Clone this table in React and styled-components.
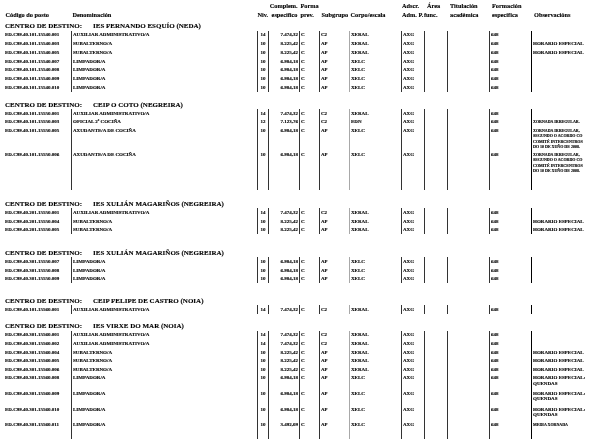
import styled, { createGlobalStyle } from "styled-components";

const GlobalStyle = createGlobalStyle`
  html, body {
    margin: 0;
    padding: 0;
    background: #fff;
    overflow: hidden;
  }
  body {
    font-family: "Liberation Serif", "Times New Roman", serif;
    color: #000;
  }
`;

const COLS = "67px 186px 11px 31px 20px 30px 52px 23px 23px 42px 42px 1fr";

const aux = (code) => ({
  code,
  den: "AUXILIAR ADMINISTRATIVO/A",
  niv: "14",
  comp: "7.474,32",
  sub: "C2",
  corpo: "XERAL",
  obs: [],
});

const subal = (code, obs = ["HORARIO ESPECIAL"]) => ({
  code,
  den: "SUBALTERNO/A",
  niv: "10",
  comp: "8.225,42",
  sub: "AP",
  corpo: "XERAL",
  obs,
});

const limp = (code, obs = [], comp = "6.984,18", h, small) => ({
  code,
  den: "LIMPADOR/A",
  niv: "10",
  comp,
  sub: "AP",
  corpo: "XELC",
  obs,
  h,
  small,
});

const irregular = [
  "XORNADA IRREGULAR,",
  "SEGUNDO O ACORDO CO",
  "COMITÉ INTERCENTROS",
  "DO 10 DE XUÑO DE 2008.",
];

const quendas = ["HORARIO ESPECIAL:", "QUENDAS"];

const sections = [
  {
    name: "IES FERNANDO ESQUÍO (NEDA)",
    mt: 4,
    rowH: 8.8,
    rows: [
      aux("ED.C99.40.101.15540.001"),
      subal("ED.C99.40.101.15540.003"),
      subal("ED.C99.40.101.15540.005"),
      limp("ED.C99.40.101.15540.007"),
      limp("ED.C99.40.101.15540.008"),
      limp("ED.C99.40.101.15540.009"),
      limp("ED.C99.40.101.15540.010"),
    ],
  },
  {
    name: "CEIP O COTO (NEGREIRA)",
    mt: 8.5,
    rows: [
      aux("ED.C99.40.101.15550.001"),
      {
        code: "ED.C99.40.101.15550.003",
        den: "OFICIAL 2ª COCIÑA",
        niv: "12",
        comp: "7.123,76",
        sub: "C2",
        corpo: "EDN",
        obs: ["XORNADA IRREGULAR."],
        small: true,
      },
      {
        code: "ED.C99.40.101.15550.005",
        den: "AXUDANTE/A DE COCIÑA",
        niv: "10",
        comp: "6.984,18",
        sub: "AP",
        corpo: "XELC",
        obs: irregular,
        small: true,
        h: 24,
      },
      {
        code: "ED.C99.40.101.15550.006",
        den: "AXUDANTE/A DE COCIÑA",
        niv: "10",
        comp: "6.984,18",
        sub: "AP",
        corpo: "XELC",
        obs: irregular,
        small: true,
        h: 39.5,
      },
    ],
  },
  {
    name: "IES XULIÁN MAGARIÑOS (NEGREIRA)",
    mt: 10,
    rows: [
      aux("ED.C99.40.201.15550.001"),
      subal("ED.C99.40.201.15550.004"),
      subal("ED.C99.40.201.15550.005"),
    ],
  },
  {
    name: "IES XULIÁN MAGARIÑOS (NEGREIRA)",
    mt: 14.7,
    rows: [
      limp("ED.C99.40.301.15550.007"),
      limp("ED.C99.40.301.15550.008"),
      limp("ED.C99.40.301.15550.009"),
    ],
  },
  {
    name: "CEIP FELIPE DE CASTRO (NOIA)",
    mt: 13.5,
    rows: [aux("ED.C99.40.101.15560.001")],
  },
  {
    name: "IES VIRXE DO MAR (NOIA)",
    mt: 8.5,
    rows: [
      aux("ED.C99.40.301.15560.001"),
      aux("ED.C99.40.301.15560.002"),
      subal("ED.C99.40.301.15560.004"),
      subal("ED.C99.40.301.15560.005"),
      subal("ED.C99.40.301.15560.006"),
      limp("ED.C99.40.301.15560.008", quendas, "6.984,18", 15.6),
      limp("ED.C99.40.301.15560.009", quendas, "6.984,18", 15.6),
      limp("ED.C99.40.301.15560.010", quendas, "6.984,18", 15.6),
      limp("ED.C99.40.301.15560.011", ["MEDIA XORNADA"], "3.492,09", 22, true),
    ],
  },
];

export default function App() {
  return (
    <>
      <GlobalStyle />
      <Page>
        <HeadRow>
          <HeadCell>Código do posto</HeadCell>
          <HeadCell>Denominación</HeadCell>
          <HeadCell $pad={0.5}>Niv.</HeadCell>
          <HeadCell $align="right">
            Complem.
            <br />
            específico
          </HeadCell>
          <HeadCell>
            Forma
            <br />
            prev.
          </HeadCell>
          <HeadCell $pad={2.5}>Subgrupo</HeadCell>
          <HeadCell>Corpo/escala</HeadCell>
          <HeadCell $pad={1}>
            Adscr.
            <br />
            Adm. P.
          </HeadCell>
          <HeadCell $pad={0}>
            <AreaTop>Área</AreaTop>
            <br />
            func.
          </HeadCell>
          <HeadCell $pad={3}>
            Titulación
            <br />
            académica
          </HeadCell>
          <HeadCell $pad={3}>
            Formación
            <br />
            específica
          </HeadCell>
          <HeadCell $pad={3}>Observacións</HeadCell>
        </HeadRow>

        {sections.map((s, i) => (
          <Section key={i} $mt={s.mt}>
            <Title>
              <TitleLabel>CENTRO DE DESTINO:</TitleLabel>
              <span>{s.name}</span>
            </Title>
            <Table>
              {s.rows.map((r) => (
                <Row key={r.code} style={{ height: r.h || s.rowH || 8.6 }}>
                  <Cell $line="none">{r.code}</Cell>
                  <Cell>{r.den}</Cell>
                  <Cell $align="center" $pad={0}>
                    {r.niv}
                  </Cell>
                  <Cell $align="right">{r.comp}</Cell>
                  <Cell>C</Cell>
                  <Cell>{r.sub}</Cell>
                  <Cell $line="gray">{r.corpo}</Cell>
                  <Cell>AXG</Cell>
                  <Cell />
                  <Cell />
                  <Cell>648</Cell>
                  <ObsCell $line="black" $small={r.small}>
                    {r.obs.map((o) => (
                      <div key={o}>{o}</div>
                    ))}
                  </ObsCell>
                </Row>
              ))}
            </Table>
          </Section>
        ))}
      </Page>
    </>
  );
}

const Page = styled.div`
  width: 616px;
  height: 439px;
  overflow: hidden;
  padding-left: 4px;
  box-sizing: border-box;
  background: #fff;
  filter: grayscale(1);
  -webkit-text-stroke: 0.12px #000;
`;

const HeadRow = styled.div`
  display: grid;
  grid-template-columns: ${COLS};
  align-items: end;
  height: 18px;
  padding-top: 0.5px;
  box-sizing: border-box;
  font-size: 6.3px;
  font-weight: 700;
  line-height: 9px;
`;

const HeadCell = styled.div`
  padding-left: ${(p) => p.$pad ?? 1.5}px;
  padding-right: ${(p) => (p.$align === "right" ? 1.5 : 0)}px;
  text-align: ${(p) => p.$align || "left"};
  white-space: nowrap;
`;

const AreaTop = styled.span`
  padding-left: 3px;
`;

const Section = styled.section`
  margin-top: ${(p) => p.$mt}px;
`;

const Title = styled.div`
  display: flex;
  height: 8px;
  line-height: 8px;
  margin-bottom: 0.5px;
  padding-left: 1px;
  font-size: 7px;
  font-weight: 700;
  white-space: nowrap;
`;

const TitleLabel = styled.span`
  width: 88px;
  flex-shrink: 0;
`;

const Table = styled.div`
  display: flex;
  flex-direction: column;
`;

const Row = styled.div`
  display: grid;
  grid-template-columns: ${COLS};
  font-size: 5px;
  font-weight: 700;
  line-height: 5.3px;
`;

const lineColors = {
  dark: "1px solid #333",
  gray: "1.5px solid #a8a8a8",
  black: "1.5px solid #000",
  none: "0 none",
};

const Cell = styled.div`
  border-left: ${(p) => lineColors[p.$line || "dark"]};
  padding: 1.8px ${(p) => (p.$align === "right" ? 1 : 0)}px 0
    ${(p) => p.$pad ?? 1}px;
  text-align: ${(p) => p.$align || "left"};
  white-space: nowrap;
  overflow: hidden;
`;

const ObsCell = styled(Cell)`
  font-size: ${(p) => (p.$small ? 4 : 5)}px;
`;
